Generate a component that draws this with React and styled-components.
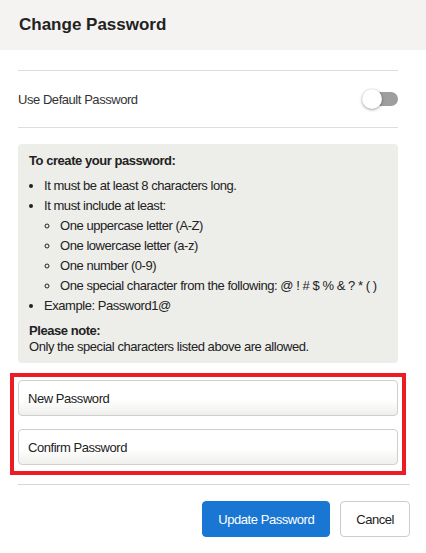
import React from "react";
import styled, { createGlobalStyle } from "styled-components";

const Global = createGlobalStyle`
  html, body { margin: 0; padding: 0; background: #fff; }
  body { font-family: "Liberation Sans", Arial, sans-serif; color: #222; }
  * { box-sizing: border-box; }
`;

const Header = styled.div`
  height: 50px;
  background: #f4f3f1;
  display: flex;
  align-items: center;
  padding-left: 19px;
`;

const Title = styled.h2`
  margin: 0;
  font-size: 17px;
  font-weight: bold;
  color: #222;
`;

const Body = styled.div`
  padding: 20px 16px 0 18px;
  font-size: 13px;
  letter-spacing: -0.45px;
`;

const Content = styled.div`
  margin-right: 12px;
`;

const Divider = styled.div`
  height: 1px;
  background: #dedede;
`;

const ToggleRow = styled.div`
  height: 56px;
  display: flex;
  align-items: center;
  justify-content: space-between;
  color: #333;
`;

const Switch = styled.div`
  position: relative;
  width: 36px;
  height: 20px;
`;

const Track = styled.div`
  position: absolute;
  left: 2px;
  top: 3px;
  width: 34px;
  height: 14px;
  border-radius: 7px;
  background: #9e9e9e;
`;

const Thumb = styled.div`
  position: absolute;
  left: 0;
  top: 0;
  width: 20px;
  height: 20px;
  border-radius: 50%;
  background: #fff;
  box-shadow: 0 1px 3px rgba(0, 0, 0, 0.35), 0 0 1px rgba(0, 0, 0, 0.2);
`;

const InfoBox = styled.div`
  margin-top: 16px;
  background: #ededea;
  border-radius: 4px;
  padding: 9px 11px 8px;
  color: #222;
`;

const Strong = styled.div`
  font-weight: bold;
  line-height: 16px;
`;

const List = styled.ul`
  margin: ${(p) => (p.$nested ? "0" : "7px 0 0")};
  padding-left: ${(p) => (p.$nested ? "16px" : "15px")};
  list-style: ${(p) => (p.$nested ? "circle" : "disc")};
  line-height: 20px;
`;

const Note = styled.div`
  margin-top: 7px;
  line-height: 16px;
`;

const Highlight = styled.div`
  margin: 10px -8px 0;
  border: 4px solid #ed1c24;
  padding: 3px 4px 6px;
  display: flex;
  flex-direction: column;
  gap: 13px;
`;

const Field = styled.input`
  height: 36px;
  width: 100%;
  border: 1px solid #cfcfcf;
  border-radius: 4px;
  padding: 0 9px;
  font-family: "Liberation Sans", Arial, sans-serif;
  font-size: 13px;
  letter-spacing: -0.45px;
  color: #222;
  background: linear-gradient(#ffffff 55%, #efefec);
  outline: none;
  &::placeholder { color: #222; opacity: 1; }
`;

const FooterDivider = styled(Divider)`
  margin-top: 9px;
  background: #d6d6d6;
`;

const Actions = styled.div`
  display: flex;
  justify-content: flex-end;
  gap: 10px;
  margin-top: 16px;
`;

const Button = styled.button`
  height: 36px;
  padding: 0 15px;
  border-radius: 4px;
  font-family: "Liberation Sans", Arial, sans-serif;
  font-size: 13px;
  letter-spacing: -0.45px;
  border: 1px solid ${(p) => (p.$primary ? "#1976d2" : "#cccccc")};
  background: ${(p) => (p.$primary ? "#1976d2" : "#fff")};
  color: ${(p) => (p.$primary ? "#fff" : "#222")};
  cursor: pointer;
`;

export default function App() {
  return (
    <>
      <Global />
      <Header>
        <Title>Change Password</Title>
      </Header>
      <Body>
        <Content>
          <Divider />
          <ToggleRow>
            <span>Use Default Password</span>
            <Switch>
              <Track />
              <Thumb />
            </Switch>
          </ToggleRow>
          <Divider />
          <InfoBox>
            <Strong>To create your password:</Strong>
            <List>
              <li>It must be at least 8 characters long.</li>
              <li>
                It must include at least:
                <List $nested>
                  <li>One uppercase letter (A-Z)</li>
                  <li>One lowercase letter (a-z)</li>
                  <li>One number (0-9)</li>
                  <li>One special character from the following: @ ! # $ % &amp; ? * ( )</li>
                </List>
              </li>
              <li>Example: Password1@</li>
            </List>
            <Note>
              <Strong>Please note:</Strong>
              Only the special characters listed above are allowed.
            </Note>
          </InfoBox>
          <Highlight>
            <Field type="password" placeholder="New Password" />
            <Field type="password" placeholder="Confirm Password" />
          </Highlight>
        </Content>
        <FooterDivider />
        <Actions>
          <Button $primary>Update Password</Button>
          <Button>Cancel</Button>
        </Actions>
      </Body>
    </>
  );
}
